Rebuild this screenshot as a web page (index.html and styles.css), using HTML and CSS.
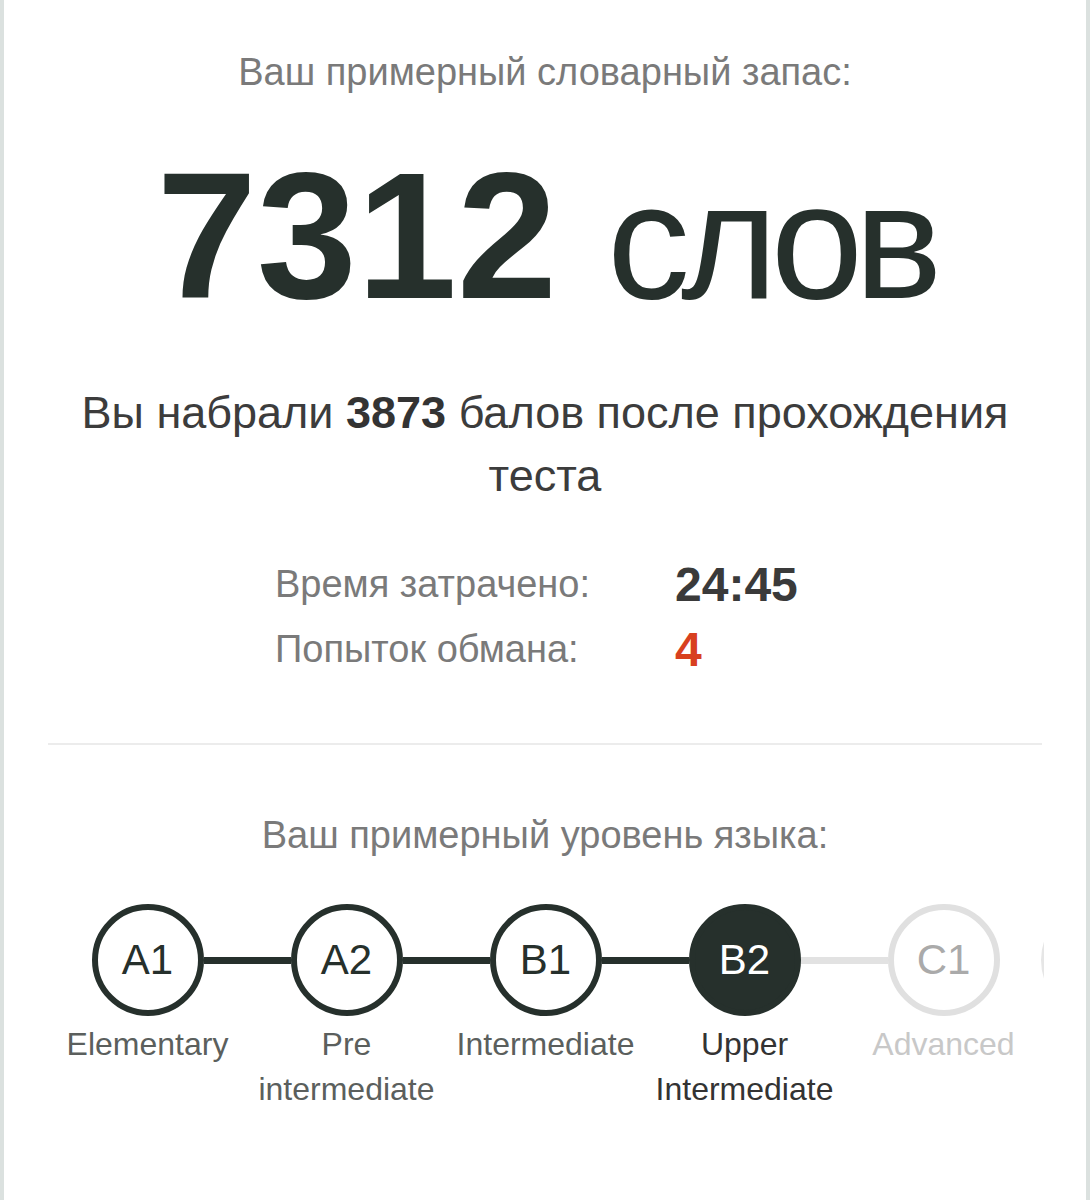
FILE: index.html
```html
<!DOCTYPE html>
<html lang="ru">
<head>
    <meta charset="UTF-8">
    <meta name="viewport" content="width=device-width, initial-scale=1.0">
    <title>Результат теста</title>
    <link rel="stylesheet" href="styles.css">
</head>
<body>
    <div class="result-card">
        <p class="caption">Ваш примерный словарный запас:</p>
        <div class="words-total">
            <span class="words-number">7312</span> <span class="words-unit">слов</span>
        </div>
        <p class="score">Вы набрали <b>3873</b> балов после прохождения теста</p>

        <div class="stats">
            <span class="stats-label">Время затрачено:</span>
            <span class="stats-value">24:45</span>
            <span class="stats-label">Попыток обмана:</span>
            <span class="stats-value danger">4</span>
        </div>

        <hr class="divider">

        <p class="caption">Ваш примерный уровень языка:</p>
        <div class="levels">
            <div class="level">
                <div class="node"><span class="link"></span><span class="dot">A1</span><span class="link on"></span></div>
                <div class="level-name">Elementary</div>
            </div>
            <div class="level">
                <div class="node"><span class="link on"></span><span class="dot">A2</span><span class="link on"></span></div>
                <div class="level-name">Pre intermediate</div>
            </div>
            <div class="level">
                <div class="node"><span class="link on"></span><span class="dot">B1</span><span class="link on"></span></div>
                <div class="level-name">Intermediate</div>
            </div>
            <div class="level current">
                <div class="node"><span class="link on"></span><span class="dot">B2</span><span class="link off"></span></div>
                <div class="level-name">Upper Intermediate</div>
            </div>
            <div class="level locked">
                <div class="node"><span class="link off"></span><span class="dot">C1</span><span class="link"></span></div>
                <div class="level-name">Advanced</div>
            </div>
            <!-- next level peeks in from the right edge -->
            <div class="level locked level-next">
                <div class="node"><span class="dot"></span></div>
            </div>
        </div>
    </div>
</body>
</html>
```

FILE: styles.css
```css
body {
    margin: 0;
    padding: 0;
    background-color: #ffffff;
    font-family: "Liberation Sans", Arial, sans-serif;
}
.result-card {
    min-height: 100vh;
    box-sizing: border-box;
    padding: 49px 44px 40px;
    border-left: 4px solid #dbe1df;
    border-right: 4px solid #dbe1df;
    background: white;
    text-align: center;
}
.caption {
    margin: 0;
    font-size: 38px;
    line-height: 46px;
    color: #7a7a7a;
}
.words-total {
    margin-top: 51px;
    height: 180px;
    font-size: 180px;
    line-height: 180px;
    color: #26302c;
    white-space: nowrap;
}
.words-number {
    font-weight: bold;
}
.words-unit {
    font-size: 166px;
    line-height: 1;
    letter-spacing: -9px;
}
.score {
    margin: 55px auto 0;
    max-width: 960px;
    font-size: 45px;
    line-height: 63px;
    color: #3c3c3c;
}
.score b {
    color: #333;
}
.stats {
    display: grid;
    grid-template-columns: 400px 140px;
    justify-content: center;
    grid-auto-rows: 65px;
    align-items: center;
    margin-top: 45px;
    text-align: left;
}
.stats-label {
    font-size: 38px;
    color: #7a7a7a;
}
.stats-value {
    font-size: 48px;
    font-weight: bold;
    color: #3a3a3a;
}
.stats-value.danger {
    color: #d8401f;
}
.divider {
    margin: 61px 0 67px;
    border: none;
    height: 2px;
    background-color: #ececec;
}
.levels {
    display: flex;
    margin-top: 46px;
    margin-right: -2px;
    overflow: hidden;
}
.level {
    flex: none;
    width: 199px;
}
.node {
    display: flex;
    align-items: center;
    height: 112px;
}
.link {
    flex: 1;
    height: 7px;
}
.link.on {
    background-color: #26302c;
}
.link.off {
    background-color: #e2e2e2;
}
.dot {
    flex: none;
    display: flex;
    align-items: center;
    justify-content: center;
    width: 112px;
    height: 112px;
    box-sizing: border-box;
    border: 6px solid #26302c;
    border-radius: 50%;
    font-size: 42px;
    color: #26302c;
}
.level-name {
    margin-top: 6px;
    font-size: 32px;
    line-height: 45px;
    color: #5b5f5d;
}
.current .dot {
    background-color: #26302c;
    color: white;
}
.current .level-name {
    color: #333;
}
.locked .dot {
    border-color: #e0e0e0;
    color: #aaa;
}
.locked .level-name {
    color: #c8c8c8;
}
.level-next {
    width: auto;
    margin-left: -2px;
}
.level-next .dot {
    border-color: #e6e6e6;
}
```
